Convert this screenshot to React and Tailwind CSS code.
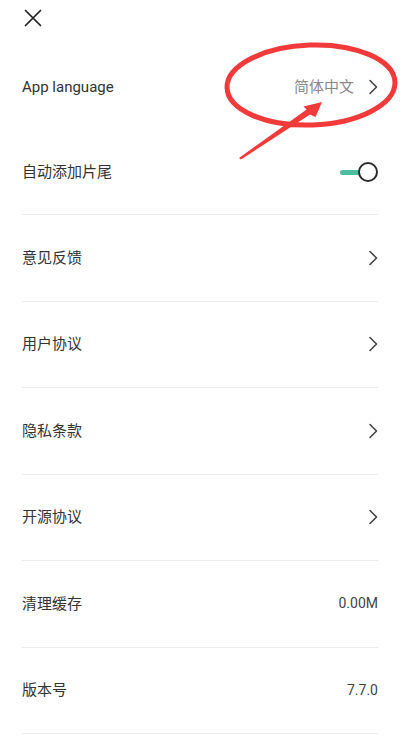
import React, { useState } from "react";

const FONT = { fontFamily: '"Roboto", "Noto Sans CJK SC", sans-serif' };

function Chevron() {
  return (
    <svg width="10" height="16" viewBox="0 0 10 16" fill="none" className="text-[#444]">
      <path d="M2 1.5 L8.5 8 L2 14.5" stroke="currentColor" strokeWidth="1.6" strokeLinecap="round" strokeLinejoin="round" />
    </svg>
  );
}

function Toggle({ on, onClick }) {
  return (
    <button type="button" onClick={onClick} className="relative flex h-[20px] w-[38px] items-center">
      <span className={`h-[5px] w-[22px] rounded-full ${on ? "bg-[#4dbf9f]" : "bg-[#cccccc]"}`} />
      <span className="absolute right-0 top-0 h-[20px] w-[20px] rounded-full border-[2px] border-[#2b2b2b] bg-white" />
    </button>
  );
}

function Row({ label, value, arrow, children, line = true, height = "h-[86.5px]" }) {
  return (
    <div className={`flex items-center justify-between ${height} ${line ? "border-b border-[#ececec]" : ""}`}>
      <span className="text-[15px] text-[#333]">{label}</span>
      <div className="flex items-center gap-[14px]">
        {value && <span className={arrow ? "text-[15px] text-[#8a8a8a]" : "text-[14px] text-[#444]"}>{value}</span>}
        {children}
        {arrow && <Chevron />}
      </div>
    </div>
  );
}

export default function App() {
  const [autoTail, setAutoTail] = useState(true);

  return (
    <div className="relative h-[755px] w-[400px] overflow-hidden bg-white" style={FONT}>
      <div className="flex h-[44px] items-start px-[24px] pt-[9px]">
        <svg width="18" height="18" viewBox="0 0 18 18" className="text-[#222]">
          <path d="M1.5 1.5 L16.5 16.5 M16.5 1.5 L1.5 16.5" stroke="currentColor" strokeWidth="1.7" strokeLinecap="round" />
        </svg>
      </div>

      <div className="px-[22px]">
        <Row label="App language" value="简体中文" arrow line={false} height="h-[86px]" />
        <Row label="自动添加片尾" height="h-[85px]">
          <Toggle on={autoTail} onClick={() => setAutoTail(!autoTail)} />
        </Row>
        <Row label="意见反馈" arrow />
        <Row label="用户协议" arrow />
        <Row label="隐私条款" arrow />
        <Row label="开源协议" arrow />
        <Row label="清理缓存" value="0.00M" />
        <Row label="版本号" value="7.7.0" />
      </div>

      {/* red annotation drawn over the screenshot */}
      <svg className="pointer-events-none absolute left-0 top-0" width="400" height="755" viewBox="0 0 400 755">
        <ellipse cx="311" cy="85" rx="84" ry="40" fill="none" stroke="#f23a3a" strokeWidth="5" transform="rotate(-2 311 85)" />
        <polygon points="239,158 306.6,109.6 303.5,106.5 322,102 315.5,117 310,114.4 241,159.5" fill="#f23a3a" />
      </svg>
    </div>
  );
}
